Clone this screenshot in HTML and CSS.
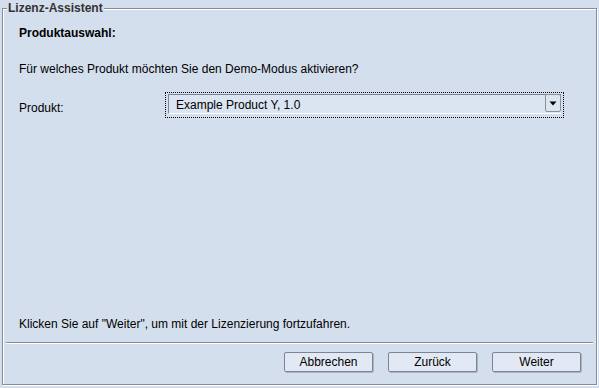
FILE: index.html
```html
<!DOCTYPE html>
<html lang="de">
<head>
<meta charset="utf-8">
<title>Lizenz-Assistent</title>
<link rel="stylesheet" href="styles.css">
</head>
<body>
<div class="panel">
  <div class="legend">Lizenz-Assistent</div>
  <div class="heading">Produktauswahl:</div>
  <div class="question">Für welches Produkt möchten Sie den Demo-Modus aktivieren?</div>
  <div class="row">
    <div class="label">Produkt:</div>
    <div class="focus">
      <div class="combo">
        <span class="combo-text">Example Product Y, 1.0</span>
        <span class="arrow">
          <svg width="8" height="5" viewBox="0 0 8 5"><path d="M0.5 0.5 H7.5 L4 4.5 Z" fill="#000"/></svg>
        </span>
      </div>
    </div>
  </div>
  <div class="spacer"></div>
  <div class="hint">Klicken Sie auf "Weiter", um mit der Lizenzierung fortzufahren.</div>
  <div class="separator"></div>
  <div class="buttons">
    <button class="btn">Abbrechen</button>
    <button class="btn">Zurück</button>
    <button class="btn">Weiter</button>
  </div>
</div>
</body>
</html>
```
FILE: styles.css
```css
html, body {
  margin: 0;
  padding: 0;
  background: #d4dfee;
  width: 599px;
  height: 388px;
  overflow: hidden;
}
body {
  font-family: "Liberation Sans", Arial, sans-serif;
  font-size: 12px;
  line-height: 14px;
  color: #000;
}
.panel {
  position: relative;
  box-sizing: border-box;
  margin: 8px 0 0 2px;
  width: 595px;
  height: 377px;
  border: 1px solid #878c96;
  box-shadow: inset 1px 1px 0 #fff, 1px 1px 0 #fff;
  display: flex;
  flex-direction: column;
  padding: 17px 0 12px 0;
}
.legend {
  position: absolute;
  top: -8px;
  left: 4px;
  padding: 0 1px;
  background: #d4dfee;
  font-weight: bold;
  color: #333;
}
.heading {
  font-weight: bold;
  padding-left: 16px;
}
.question {
  margin-top: 22px;
  padding-left: 16px;
}
.row {
  margin-top: 16px;
  display: flex;
  align-items: flex-start;
  padding-left: 16px;
}
.label {
  width: 146px;
  padding-top: 9px;
}
.focus {
  width: 399px;
  height: 26px;
  box-sizing: border-box;
  border: 1px dotted #000;
  padding: 1px 2px 3px 2px;
}
.combo {
  box-sizing: border-box;
  height: 20px;
  display: flex;
  justify-content: space-between;
  background: #dbe4f1;
  border-top: 1px solid #7f8693;
  border-left: 1px solid #7f8693;
  border-bottom: 1px solid #fff;
}
.combo-text {
  padding: 3px 0 0 7px;
}
.arrow {
  box-sizing: border-box;
  width: 16px;
  height: 18px;
  margin-top: -1px;
  border: 1px solid #8a909c;
  border-radius: 2px;
  background: #dde5f1;
  display: flex;
  align-items: center;
  justify-content: center;
}
.arrow svg {
  display: block;
  margin-top: 1px;
}
.spacer {
  flex: 1;
}
.hint {
  padding-left: 16px;
}
.separator {
  margin: 11px 3px 0 3px;
  height: 1px;
  background: #878c96;
  border-bottom: 1px solid #fff;
}
.buttons {
  margin-top: 8px;
  display: flex;
  justify-content: flex-end;
  gap: 15px;
  padding-right: 15px;
}
.btn {
  box-sizing: border-box;
  width: 89px;
  height: 20px;
  margin: 0;
  padding: 0;
  font-family: "Liberation Sans", Arial, sans-serif;
  font-size: 12px;
  line-height: 18px;
  color: #000;
  background: #e3e9f4;
  border: 1px solid #7e8592;
  border-radius: 2px;
  box-shadow: 1px 1px 0 #aab3c2;
}
```
